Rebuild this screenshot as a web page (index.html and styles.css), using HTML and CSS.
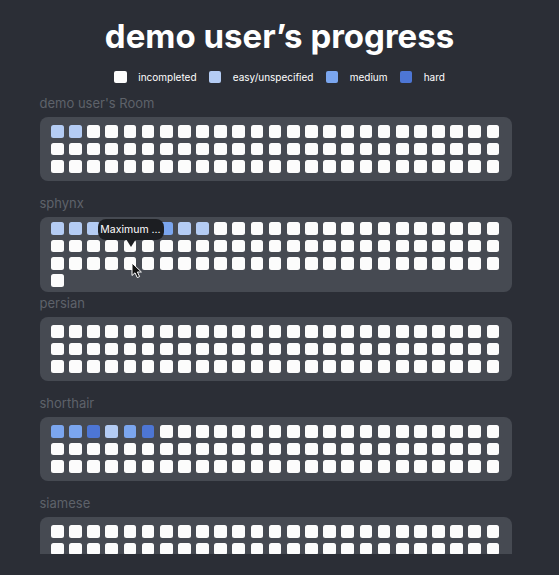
FILE: index.html
```html
<!DOCTYPE html>
<html lang="en">
<head>
<meta charset="utf-8">
<title>demo user’s progress</title>
<link rel="stylesheet" href="styles.css">
</head>
<body>
<header class="header">
  <h1 class="title">demo user’s progress</h1>
  <div class="legend">
    <div class="legend-item"><span class="swatch"></span><span>incompleted</span></div>
    <div class="legend-item"><span class="swatch easy"></span><span>easy/unspecified</span></div>
    <div class="legend-item"><span class="swatch medium"></span><span>medium</span></div>
    <div class="legend-item"><span class="swatch hard"></span><span>hard</span></div>
  </div>
</header>
<main class="list">
  <section class="room">
    <div class="room-name">demo user's Room</div>
    <div class="card"><div class="grid" data-cells="ee" data-count="75"></div></div>
  </section>
  <section class="room">
    <div class="room-name">sphynx</div>
    <div class="card">
      <div class="grid" data-cells="eeeeeemee" data-count="76"></div>
      <div class="tooltip">Maximum ...</div>
      <svg class="cursor" width="12" height="17" viewBox="0 0 12 17"><path d="M1 1 L1 13.5 L4 10.8 L6.3 15.6 L8.6 14.6 L6.4 10 L10.4 10 Z" fill="#111" stroke="#fff" stroke-width="1" stroke-linejoin="round"/></svg>
    </div>
  </section>
  <section class="room">
    <div class="room-name">persian</div>
    <div class="card"><div class="grid" data-cells="" data-count="75"></div></div>
  </section>
  <section class="room">
    <div class="room-name">shorthair</div>
    <div class="card"><div class="grid" data-cells="mmhemh" data-count="75"></div></div>
  </section>
  <section class="room">
    <div class="room-name">siamese</div>
    <div class="card"><div class="grid" data-cells="" data-count="75"></div></div>
  </section>
</main>
<script src="script.js"></script>
</body>
</html>
```
FILE: styles.css
```css
html, body {
  margin: 0;
  padding: 0;
}
body {
  background: #2b2e36;
  font-family: Inter, "Noto Sans", sans-serif;
  height: 575px;
  overflow: hidden;
}
.header {
  padding-top: 16px;
  text-align: center;
}
.title {
  margin: 0;
  font-size: 33px;
  line-height: 40px;
  font-weight: 700;
  color: #ffffff;
  letter-spacing: 0;
}
.legend {
  display: flex;
  justify-content: center;
  align-items: center;
  margin-top: 13.7px;
  height: 14px;
  color: #ffffff;
  font-size: 10px;
}
.legend-item {
  display: flex;
  align-items: center;
  gap: 11.5px;
  margin: 0 6px;
}
.swatch {
  width: 12.7px;
  height: 12px;
  border-radius: 2px;
  background: #fdfdfd;
}

.list {
  margin-top: 11.8px;
  height: 458.5px;
  overflow: hidden;
  padding-left: 39.5px;
}
.room {
  height: 100px;
}
.room-name {
  font-size: 13px;
  line-height: 16px;
  color: #5e626a;
  margin-bottom: 5.8px;
}
.card {
  position: relative;
  width: 472px;
  box-sizing: border-box;
  min-height: 63.4px;
  padding: 4.85px 11.7px 4.85px 11.4px;
  background: #464a52;
  border-radius: 8px;
  display: flex;
  align-items: center;
}
.grid {
  display: grid;
  grid-template-columns: repeat(25, 12.7px);
  column-gap: 5.48px;
  row-gap: 4.85px;
}
.cell {
  height: 12.6px;
  background: #fcfcfc;
  border-radius: 2.5px;
}
.swatch.easy, .cell.easy { background: #b4ccf4; }
.swatch.medium, .cell.medium { background: #7ba6ef; }
.swatch.hard, .cell.hard { background: #4d76d5; }

.tooltip {
  position: absolute;
  left: 58px;
  top: 1.4px;
  width: 66px;
  height: 21px;
  line-height: 21px;
  background: #1c1e22;
  color: #ffffff;
  font-size: 10.5px;
  text-align: center;
  border-radius: 8px;
}
.tooltip::after {
  content: "";
  position: absolute;
  left: 28px;
  top: 20px;
  border-left: 5px solid transparent;
  border-right: 5px solid transparent;
  border-top: 8px solid #1c1e22;
}
.cursor {
  position: absolute;
  left: 91.5px;
  top: 44.7px;
}
```
FILE: script.js
```js
document.querySelectorAll('.grid').forEach(function (grid) {
  var cells = grid.getAttribute('data-cells');
  var count = parseInt(grid.getAttribute('data-count'), 10);
  var map = { e: 'easy', m: 'medium', h: 'hard' };
  for (var i = 0; i < count; i++) {
    var c = document.createElement('div');
    c.className = 'cell' + (map[cells[i]] ? ' ' + map[cells[i]] : '');
    grid.appendChild(c);
  }
});
```
